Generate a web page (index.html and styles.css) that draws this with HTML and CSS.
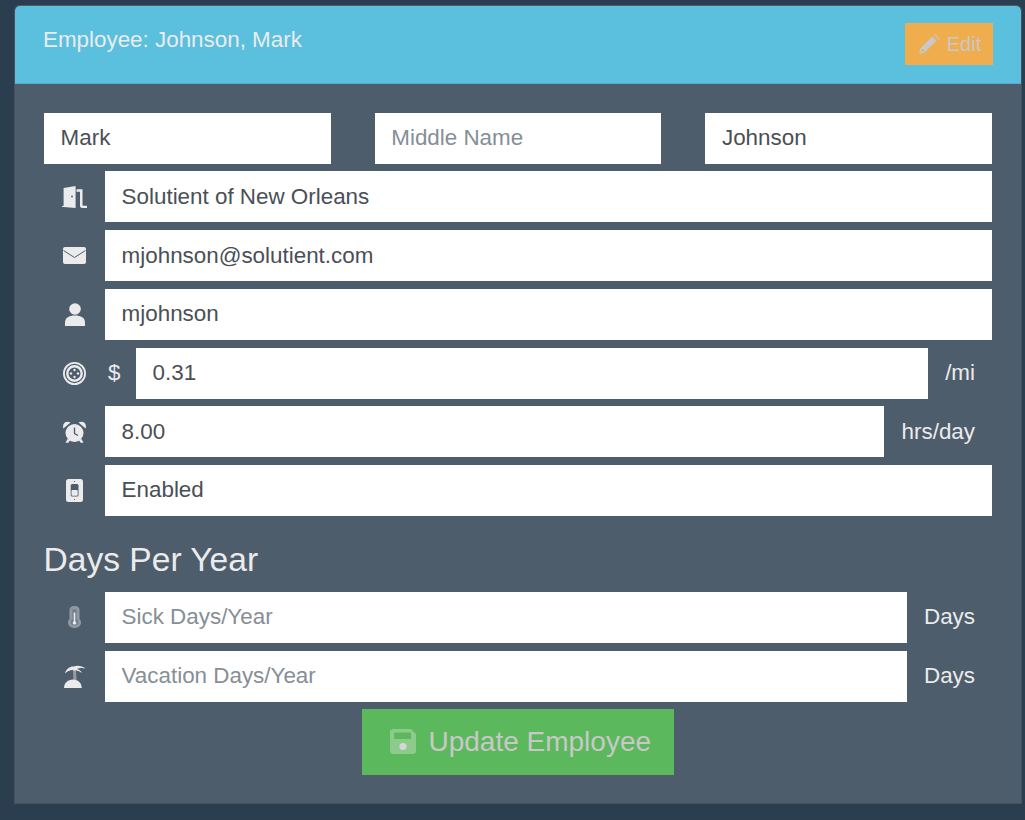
FILE: index.html
```html
<!DOCTYPE html>
<html lang="en">
<head>
<meta charset="utf-8">
<title>Employee</title>
<link rel="stylesheet" href="styles.css">
</head>
<body>
<section class="panel">
  <header class="panel-heading">
    <h1 class="panel-title">Employee: Johnson, Mark</h1>
    <button class="btn btn-edit" type="button">
      <svg class="btn-icon-sm" viewBox="0 0 21 20"><path d="M0 20l1.400-5.600L13.200 2.600l4.200 4.200L5.600 18.600z" fill="#c8c8c8"/><path d="M2.200 17.800l1-3.400 2.400 2.400z" fill="#f0ad4e"/><path d="M14.400 1.400l1-1c.5-.5 1.200-.5 1.700 0l3.500 3.500c.5.5.5 1.200 0 1.700l-1 1z" fill="#c8c8c8" opacity=".55"/></svg>
      <span>Edit</span>
    </button>
  </header>
  <div class="panel-body">
    <div class="row name-row">
      <input class="field" value="Mark" aria-label="First name">
      <input class="field" placeholder="Middle Name" aria-label="Middle name">
      <input class="field" value="Johnson" aria-label="Last name">
    </div>
    <div class="row">
      <span class="ico-cell"><svg class="ico" width="25" height="22" viewBox="0 0 25 22"><path d="M1.600 2L13.600 0v22l-12-1H0v-.8l1.600-.4z" fill="#ebebeb"/><circle cx="10" cy="10.500" r=".9" fill="#4e5d6c"/><path d="M14.500 3.200h6v15.800c0 .5.300.8.800.8H25V22h-4.500c-1.400 0-2.500-.8-2.500-2.200V5.800h-3.500z" fill="#ebebeb"/></svg></span>
      <input class="field" value="Solutient of New Orleans" aria-label="Company">
    </div>
    <div class="row">
      <span class="ico-cell"><svg class="ico" width="23" height="17" viewBox="0 0 23 17"><rect width="23" height="17" rx="2" fill="#ebebeb"/><path d="M.5 3.500l11 7 11-7" fill="none" stroke="#4e5d6c" stroke-width="1"/></svg></span>
      <input class="field" value="mjohnson@solutient.com" aria-label="Email">
    </div>
    <div class="row">
      <span class="ico-cell"><svg class="ico" width="20" height="23" viewBox="0 0 20 23"><circle cx="10" cy="6" r="5.800" fill="#ebebeb"/><path d="M0 23v-3.500C0 15 4 12.500 10 12.500S20 15 20 19.500V23z" fill="#ebebeb"/></svg></span>
      <input class="field" value="mjohnson" aria-label="Username">
    </div>
    <div class="row">
      <span class="ico-cell"><svg class="ico" width="23" height="23" viewBox="0 0 23 23"><circle cx="11.500" cy="11.500" r="10.600" fill="none" stroke="#ebebeb" stroke-width="1.800"/><circle cx="11.500" cy="11.500" r="7.200" fill="none" stroke="#ebebeb" stroke-width="2.400"/><g fill="#ebebeb"><circle cx="11.500" cy="8" r="1.200"/><circle cx="8" cy="11.500" r="1.200"/><circle cx="15" cy="11.500" r="1.200"/><circle cx="11.500" cy="15" r="1.200"/></g></svg></span>
      <span class="addon addon-pre">$</span>
      <input class="field" value="0.31" aria-label="Rate per mile">
      <span class="addon">/mi</span>
    </div>
    <div class="row">
      <span class="ico-cell"><svg class="ico" width="23" height="22" viewBox="0 0 23 22"><path d="M.4 7.500C-1.200 2.500 3-1 7.500 1.500z" fill="#ebebeb"/><path d="M22.600 7.500C24.200 2.500 20-1 15.500 1.500z" fill="#ebebeb"/><circle cx="11.500" cy="12" r="9" fill="#ebebeb"/><path d="M4.500 18l-2 3.800h2.800l2-2.800zM18.500 18l2 3.800h-2.800l-2-2.800z" fill="#ebebeb"/><path d="M11.500 6.500V12.500l3.500 2" fill="none" stroke="#4e5d6c" stroke-width="1.300"/></svg></span>
      <input class="field" value="8.00" aria-label="Hours per day">
      <span class="addon addon-wide">hrs/day</span>
    </div>
    <div class="row">
      <span class="ico-cell"><svg class="ico" width="17" height="23" viewBox="0 0 17 23"><rect width="17" height="23" rx="2.500" fill="#ebebeb"/><rect x="4.700" y="5" width="7.800" height="12.500" rx="1.500" fill="#4e5d6c"/><rect x="5.500" y="11" width="6.200" height="5.800" rx="1" fill="#ebebeb"/><circle cx="8.500" cy="2.500" r=".6" fill="#4e5d6c"/><circle cx="8.500" cy="20.500" r=".6" fill="#4e5d6c"/></svg></span>
      <input class="field" value="Enabled" aria-label="Status">
    </div>
    <h2 class="section-title">Days Per Year</h2>
    <div class="row">
      <span class="ico-cell"><svg class="ico" width="13" height="22" viewBox="0 0 13 22"><path d="M6.500 0C3.500 0 1.500 1.600 1.500 4v9C.5 14 0 15.200 0 16.500 0 19.800 3 22 6.500 22S13 19.800 13 16.500c0-1.300-.5-2.500-1.500-3.500V4C11.500 1.600 9.500 0 6.500 0z" fill="#8f99a3"/><path d="M4.500 3.500h4v9.500c1 .7 1.700 1.900 1.700 3.200 0 1.900-1.600 3.300-3.700 3.300s-3.700-1.400-3.700-3.300c0-1.300.7-2.500 1.700-3.200z" fill="#6f7c89"/><path d="M5.700 6.500h1.600v9c.6.300 1 .8 1 1.400 0 .9-.8 1.600-1.800 1.600s-1.800-.7-1.800-1.600c0-.6.400-1.100 1-1.400z" fill="#ebebeb"/></svg></span>
      <input class="field" placeholder="Sick Days/Year" aria-label="Sick days per year">
      <span class="addon">Days</span>
    </div>
    <div class="row">
      <span class="ico-cell"><svg class="ico" width="22" height="23" viewBox="0 0 22 23"><path d="M9 5h3l.5 10.500H9.500z" fill="#949da7"/><path d="M0 23C0 18 4 14.500 9 14.500S17.700 18 17.700 23z" fill="#ebebeb"/><path d="M1 8.500C2 3 7 1 10 1.500 13 0 18 1 21.500 3.500 18.500 2.500 15 3 13 4c2 .5 4 2 5 4-3-2-5-2.500-7-2.500C8 4 4 5.500 1 8.500z" fill="#ebebeb"/></svg></span>
      <input class="field" placeholder="Vacation Days/Year" aria-label="Vacation days per year">
      <span class="addon">Days</span>
    </div>
    <div class="actions">
      <button class="btn btn-update" type="button">
        <svg class="btn-icon-lg" viewBox="0 0 26 25"><path d="M3 0h18l5 5v17c0 1.700-1.300 3-3 3H3c-1.700 0-3-1.300-3-3V3c0-1.700 1.300-3 3-3z" fill="#8ccb8c"/><rect x="4" y="3.500" width="17" height="6.500" rx="1" fill="#5cb85c"/><circle cx="13" cy="17.500" r="3.600" fill="#d6d6d6"/></svg>
        <span>Update Employee</span>
      </button>
    </div>
  </div>
</section>
</body>
</html>
```
FILE: styles.css
```css
* { box-sizing: border-box; }
html, body { margin: 0; padding: 0; }
body {
  background: #2b3e50;
  font-family: "Liberation Sans", Arial, sans-serif;
  color: #ebebeb;
  padding: 5px 3px 16px 14px;
}
.panel {
  background: #4e5d6c;
  border: 1px solid #44525f;
  border-top-color: #4e5d6c;
  border-radius: 6px 6px 0 0;
  height: 799px;
  overflow: hidden;
}
.panel-heading {
  background: #5bc0de;
  border-bottom: 1px solid #52aecb;
  height: 78px;
  padding: 17px 28px 0 28px;
  display: flex;
  justify-content: space-between;
  align-items: flex-start;
}
.panel-title {
  margin: 0;
  font-size: 22.4px;
  font-weight: 400;
  line-height: 34px;
  color: #ebebeb;
}
.btn {
  border: 0;
  border-radius: 0;
  font-family: inherit;
  color: #c8c8c8;
  display: flex;
  align-items: center;
  justify-content: center;
  padding: 0;
}
.btn-edit {
  background: #f0ad4e;
  width: 88px;
  height: 42px;
  font-size: 20px;
  gap: 7px;
  padding-left: 2px;
}
.btn-icon-sm { width: 21px; height: 20px; }
.panel-body {
  padding: 28.7px 29px 0;
  display: flex;
  flex-direction: column;
  gap: 7.62px;
}
.row {
  display: flex;
  align-items: center;
  height: 51.1px;
  flex: none;
}
.name-row { gap: 44px; }
.ico-cell {
  flex: none;
  width: 61px;
  display: flex;
  align-items: center;
  justify-content: center;
}
.ico { display: block; }
.field {
  flex: 1 1 0;
  min-width: 0;
  height: 100%;
  border: 0;
  border-radius: 0;
  background: #fff;
  padding: 0 16.6px;
  font-family: inherit;
  font-size: 22.4px;
  color: #4a4f55;
  outline: none;
}
.field::placeholder { color: #868e96; opacity: 1; }
.addon {
  flex: none;
  padding: 0 17px;
  font-size: 22.4px;
  color: #ebebeb;
}
.addon-wide { padding-left: 18px; }
.addon-pre { padding: 0 0 0 3px; width: 31px; }
.section-title {
  margin: 0 0 0 -0.5px;
  font-size: 33.6px;
  font-weight: 400;
  line-height: 38px;
  height: 60.7px;
  padding-top: 17px;
  color: #ebebeb;
}
.actions {
  display: flex;
  justify-content: center;
  margin-top: -0.5px;
}
.btn-update {
  background: #5cb85c;
  width: 312px;
  height: 66px;
  font-size: 28px;
  gap: 12.5px;
  padding-left: 5px;
}
.btn-icon-lg { width: 26px; height: 25px; }
```
